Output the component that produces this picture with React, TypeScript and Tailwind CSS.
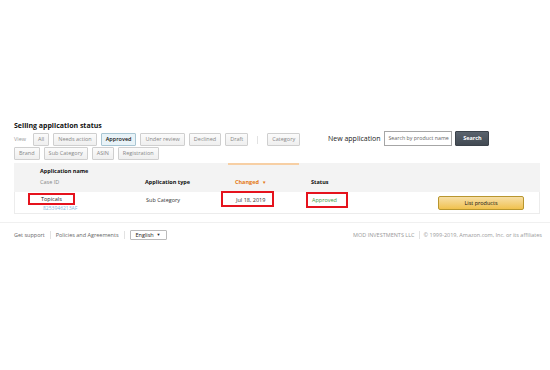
import React from "react";

const filtrosLinha1 = ["All", "Needs action", "Approved", "Under review", "Declined", "Draft"];
const filtrosLinha2 = ["Brand", "Sub Category", "ASIN", "Registration"];

function Filtro({ label, ativo }: { label: string; ativo?: boolean }) {
  return (
    <span
      className={`h-[13px] px-[4px] flex items-center rounded-[1px] border text-[5.5px] leading-none whitespace-nowrap ${
        ativo
          ? "bg-[#e8f3f8] border-[#a9c6d3] text-[#111] font-semibold"
          : "bg-gradient-to-b from-[#fbfbfb] to-[#efefef] border-[#cfcfcf] text-[#888]"
      }`}
    >
      {label}
    </span>
  );
}

export default function App() {
  return (
    <main className="w-[550px] h-[370px] overflow-hidden bg-white text-[#111] font-['Open_Sans',sans-serif]">
      <section className="pt-[121px] pl-[14px] pr-[10px]">
        {/* Titulo */}
        <h1 className="text-[7px] leading-[10px] font-bold">Selling application status</h1>

        {/* Barra de filtros + nova aplicacao */}
        <div className="flex mt-[2px]">
          <div className="w-[314px] flex flex-col gap-[1px]">
            <div className="flex items-center gap-[4px]">
              <span className="text-[5.5px] text-[#999] w-[15px]">View</span>
              {filtrosLinha1.map((f) => (
                <Filtro key={f} label={f} ativo={f === "Approved"} />
              ))}
              <span className="mx-[5px] w-px h-[8px] bg-[#e2e2e2]" />
              <Filtro label="Category" />
            </div>
            <div className="flex items-center gap-[4px]">
              {filtrosLinha2.map((f) => (
                <Filtro key={f} label={f} />
              ))}
            </div>
          </div>

          <div className="flex items-center h-[15px] -mt-[2px]">
            <span className="text-[7px] leading-none text-[#222]">New application</span>
            <div className="ml-[4px] w-[68px] h-[15px] border border-[#a6a6a6] bg-white flex items-center px-[3px] overflow-hidden">
              <span className="text-[5.3px] text-[#666] whitespace-nowrap">Search by product name</span>
            </div>
            <button className="ml-[3px] w-[34px] h-[15px] rounded-[1px] bg-gradient-to-b from-[#5a636d] to-[#424a53] border border-[#3b424a] text-white text-[5.5px] font-bold">
              Search
            </button>
          </div>
        </div>

        {/* Tabela */}
        <div className="mt-[3px]">
          <div className="grid grid-cols-[131px_83px_71px_138px_86px_1fr] h-[29px] bg-[#f3f3f3] text-[5.5px] leading-[10px]">
            <div className="pl-[26px] pt-[3px]">
              <p className="font-bold">Application name</p>
              <p className="mt-[1px] text-[#888]">Case ID</p>
            </div>
            <div className="flex items-end pb-[5px] font-bold">Application type</div>
            <div className="flex items-end pb-[5px] pl-[7px] border-t-2 border-[#f7cfa4] text-[#e47911] font-bold">
              Changed <span className="ml-[3px] text-[4.5px]">▼</span>
            </div>
            <div className="flex items-end pb-[5px] pl-[12px] font-bold">Status</div>
            <div />
            <div />
          </div>

          <div className="grid grid-cols-[131px_83px_71px_138px_86px_1fr] h-[22px] border-x border-b border-[#ececec] text-[5.5px] leading-[10px]">
            <div className="relative pl-[28px]">
              <p className="pt-[13px] text-[#7fb6da] text-[5px] leading-[6px] whitespace-nowrap">8253946213AF</p>
              {/* marcação vermelha */}
              <span className="absolute left-[13px] top-[1px] w-[47px] h-[12px] border-2 border-[#e5131d] bg-white flex items-center pl-[11px] text-[#222]">
                Topicals
              </span>
            </div>
            <div className="pt-[3px] text-[#333]">Sub Category</div>
            <div className="relative pt-[3px] pl-[7px] text-[#333]">
              Jul 18, 2019
              <span className="absolute -left-[8px] -top-[1px] w-[53px] h-[16px] border-2 border-[#e5131d]" />
            </div>
            <div className="relative pt-[3px] pl-[12px] text-[#3c9a3c]">
              Approved
              <span className="absolute left-[6px] top-0 w-[42px] h-[16px] border-2 border-[#e5131d]" />
            </div>
            <div className="pt-[4px]">
              <button className="w-[86px] h-[14px] rounded-[2px] border border-[#b8962f] bg-gradient-to-b from-[#f7dfa5] to-[#f0c14b] text-[5.5px] text-[#111]">
                List products
              </button>
            </div>
            <div />
          </div>
        </div>
      </section>

      {/* Rodape */}
      <footer className="mt-[8px] border-t border-[#f0f0f0] pt-[7px] pl-[14px] pr-[8px] flex items-center justify-between text-[5.5px] text-[#666]">
        <div className="flex items-center">
          <span>Get support</span>
          <span className="mx-[5px] w-px h-[8px] bg-[#e2e2e2]" />
          <span>Policies and Agreements</span>
          <span className="mx-[5px] w-px h-[8px] bg-[#e2e2e2]" />
          <span className="w-[37px] h-[10px] border border-[#bbb] rounded-[1px] flex items-center justify-between px-[5px] text-[#222]">
            English <span className="text-[4px]">▼</span>
          </span>
        </div>
        <div className="flex items-center text-[#999]">
          <span>MOD INVESTMENTS LLC</span>
          <span className="mx-[4px] w-px h-[8px] bg-[#e2e2e2]" />
          <span>© 1999-2019, Amazon.com, Inc. or its affiliates</span>
        </div>
      </footer>
    </main>
  );
}
